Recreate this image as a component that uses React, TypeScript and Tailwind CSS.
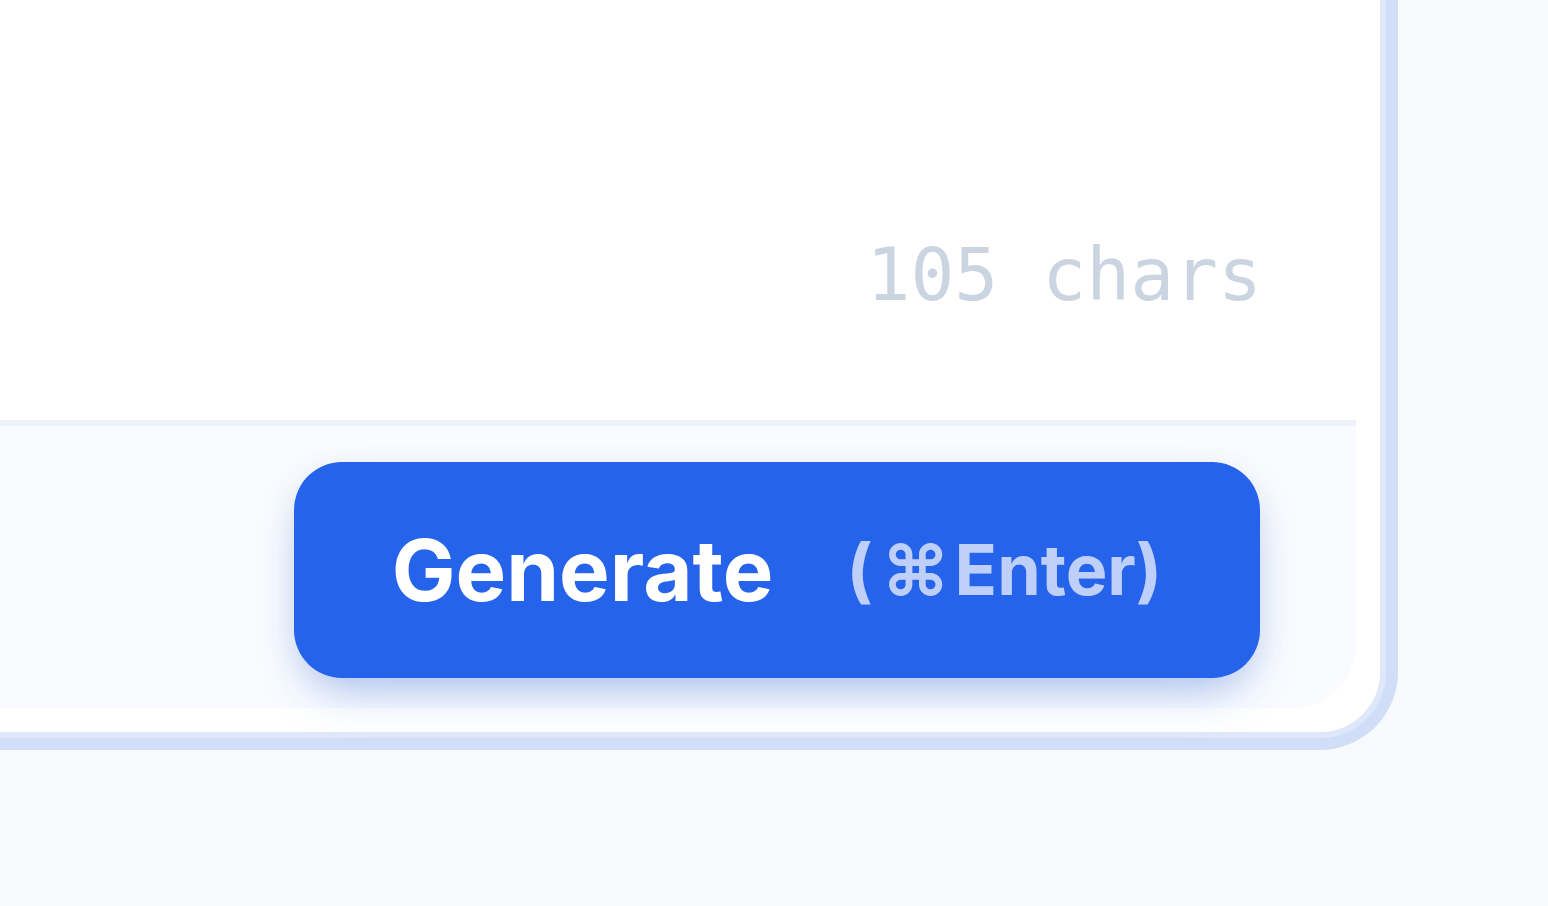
export default function App() {
  return (
    <main className="flex h-[906px] w-full items-end justify-end overflow-hidden bg-[#f8fafd] pb-[168px] pr-[162px] font-['Inter',sans-serif]">
      <div className="flex w-[1900px] shrink-0 flex-col rounded-[66px] border-[6px] border-[#dfe8fa] bg-white p-6 shadow-[0_0_0_12px_#d1def8]">
        <div className="flex h-[700px] flex-col justify-end pb-[107px] pr-[94px]">
          <p className="self-end font-['DejaVu_Sans_Mono',monospace] text-[73px] leading-[76px] text-[#cbd5e1] slashed-zero">
            105 chars
          </p>
        </div>

        <div className="flex justify-end rounded-b-[64px] border-t-[6px] border-[#eef2f9] bg-[#f9fbfe] pb-[30px] pr-[96px] pt-[36px]">
          <button className="flex h-[216px] w-[966px] items-center justify-center rounded-[48px] bg-[#2563eb] shadow-[0_22px_48px_-14px_rgba(37,99,235,0.38),0_8px_32px_rgba(15,23,42,0.06)]">
            <span className="text-[85px] font-bold leading-none text-white">Generate</span>
            <span className="ml-[73px] text-[70px] font-bold leading-none text-white/70">
              (<span className="pl-[9px] pr-[5px]">⌘</span>Enter)
            </span>
          </button>
        </div>
      </div>
    </main>
  );
}
